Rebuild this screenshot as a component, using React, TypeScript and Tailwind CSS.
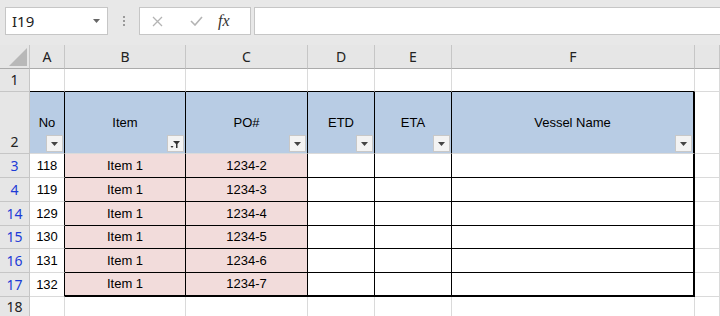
import React from 'react';

const cols = ['A', 'B', 'C', 'D', 'E', 'F', ''];
const colTemplate = 'grid-cols-[30px_35px_121px_122px_67px_77px_243px_1fr]';

const rows = [
  { n: '3', no: '118', po: '1234-2', h: 'h-[24px]' },
  { n: '4', no: '119', po: '1234-3', h: 'h-[24px]' },
  { n: '14', no: '129', po: '1234-4', h: 'h-[24px]' },
  { n: '15', no: '130', po: '1234-5', h: 'h-[23px]' },
  { n: '16', no: '131', po: '1234-6', h: 'h-[24px]' },
  { n: '17', no: '132', po: '1234-7', h: 'h-[24px]' },
];

function DropBtn({ filtered }: { filtered?: boolean }) {
  return (
    <div className="absolute right-[1px] bottom-[1px] w-[17px] h-[17px] bg-[#f3f3f3] border border-[#c8c8c8] flex items-center justify-center">
      {filtered ? (
        <svg width="11" height="10" viewBox="0 0 11 10">
          <path d="M3 2h7L7.5 5v4h-1.5V5z" fill="#333" />
          <path d="M0.5 7h3l-1.5 2z" fill="#333" />
        </svg>
      ) : (
        <svg width="7" height="4" viewBox="0 0 7 4">
          <path d="M0 0h7L3.5 4z" fill="#444" />
        </svg>
      )}
    </div>
  );
}

function RowHead({ n, blue, className = '' }: { n: string; blue?: boolean; className?: string }) {
  return (
    <div
      className={`bg-[#e6e6e6] border-r border-b border-[#c6c6c6] flex items-end justify-center pb-[1px] text-[14px] font-['Noto_Sans',sans-serif] ${blue ? 'text-[#1c3bd6]' : 'text-[#222]'} ${className}`}
    >
      {n}
    </div>
  );
}

export default function App() {
  const cell = "border-r border-b border-[#dadada] font-['Liberation_Sans',Arial,sans-serif] text-[13px] text-black flex items-center justify-center";

  return (
    <div className="w-[720px] h-[316px] overflow-hidden bg-white select-none">
      {/* formula bar */}
      <div className="h-[45px] bg-[#e8e8e8] flex items-start pt-[7px] pl-[5px] gap-0">
        <div className="w-[103px] h-[28px] bg-white border border-[#c6c6c6] flex items-center justify-between pl-[6px] pr-[7px]">
          <span className="text-[15px] text-[#222] font-['Noto_Sans',sans-serif]">I19</span>
          <svg width="7" height="4" viewBox="0 0 7 4">
            <path d="M0 0h7L3.5 4z" fill="#666" />
          </svg>
        </div>
        <div className="w-[31px] h-[28px] flex flex-col items-center justify-center gap-[2px]">
          <span className="w-[2px] h-[2px] bg-[#9a9a9a]" />
          <span className="w-[2px] h-[2px] bg-[#9a9a9a]" />
          <span className="w-[2px] h-[2px] bg-[#9a9a9a]" />
        </div>
        <div className="w-[112px] h-[28px] bg-white border border-[#c6c6c6] flex items-center">
          <svg className="ml-[12px]" width="11" height="11" viewBox="0 0 11 11">
            <path d="M1 1l9 9M10 1l-9 9" stroke="#b4b4b4" strokeWidth="1.3" />
          </svg>
          <svg className="ml-[27px]" width="13" height="10" viewBox="0 0 13 10">
            <path d="M1 5l4 4 7-8" stroke="#b4b4b4" strokeWidth="1.6" fill="none" />
          </svg>
          <span className="ml-[15px] italic text-[16px] text-[#333] font-['Liberation_Serif',serif] leading-none">fx</span>
        </div>
        <div className="ml-[3px] flex-1 h-[28px] bg-white border-y border-l border-[#c6c6c6]" />
      </div>

      {/* sheet */}
      <div className={`grid ${colTemplate}`}>
        {/* column headers */}
        <div className="h-[24px] bg-[#e6e6e6] border-r border-b border-[#ababab] border-r-[#c6c6c6] flex items-end justify-end pr-[2px] pb-[2px]">
          <svg width="18" height="18" viewBox="0 0 18 18">
            <path d="M18 0V18H0z" fill="#b8b8b8" />
          </svg>
        </div>
        {cols.map((c, i) => (
          <div
            key={i}
            className="h-[24px] bg-[#e6e6e6] border-r border-[#c6c6c6] border-b border-b-[#ababab] flex items-center justify-center text-[14px] text-[#222] font-['Noto_Sans',sans-serif]"
          >
            {c}
          </div>
        ))}

        {/* row 1 */}
        <RowHead n="1" className="h-[23px]" />
        {cols.map((c, i) => (
          <div key={i} className={`${cell} h-[23px] ${i < 6 ? 'border-b-black' : ''}`} />
        ))}

        {/* row 2 headers */}
        <RowHead n="2" className="h-[62px]" />
        {['No', 'Item', 'PO#', 'ETD', 'ETA', 'Vessel Name'].map((t, i) => (
          <div
            key={t}
            className={`${cell} h-[62px] relative bg-[#b8cce4] border-r-black ${i === 5 ? 'border-r-2' : ''}`}
          >
            {t}
            <DropBtn filtered={i === 1} />
          </div>
        ))}
        <div className={`${cell} h-[62px]`} />

        {/* data rows */}
        {rows.map((r, ri) => {
          const last = ri === rows.length - 1;
          const bb = last ? 'border-b-2 border-b-black' : 'border-b-black';
          return (
            <React.Fragment key={r.n}>
              <RowHead n={r.n} blue className={r.h} />
              <div className={`${cell} ${r.h} border-r-black`}>{r.no}</div>
              <div className={`${cell} ${r.h} bg-[#f2dcdb] border-r-black ${bb}`}>Item 1</div>
              <div className={`${cell} ${r.h} bg-[#f2dcdb] border-r-black ${bb}`}>{r.po}</div>
              <div className={`${cell} ${r.h} border-r-black ${bb}`} />
              <div className={`${cell} ${r.h} border-r-black ${bb}`} />
              <div className={`${cell} ${r.h} border-r-2 border-r-black ${bb}`} />
              <div className={`${cell} ${r.h}`} />
            </React.Fragment>
          );
        })}

        {/* row 18 */}
        <RowHead n="18" className="h-[22px]" />
        {cols.map((c, i) => (
          <div key={i} className={`${cell} h-[22px]`} />
        ))}
      </div>
    </div>
  );
}
